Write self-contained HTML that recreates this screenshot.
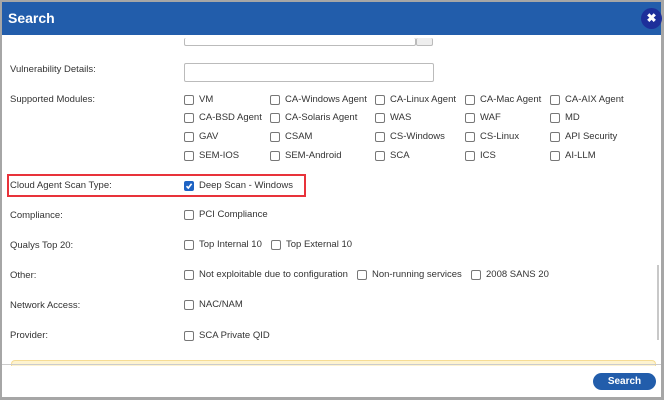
<!DOCTYPE html>
<html><head><style>
*{margin:0;padding:0;box-sizing:border-box}
body{width:664px;height:400px;background:#a6a6a6;font-family:"Liberation Sans",sans-serif;font-size:9.5px;color:#333;position:relative;overflow:hidden}
.win{position:absolute;left:2px;top:2px;width:659px;height:395px;background:#fff;overflow:hidden}
.hd{position:absolute;left:0;top:0;width:659px;height:33px;background:#225dab;color:#fff;font-weight:bold;font-size:14px;line-height:33px;padding-left:6px}
.x{position:absolute;left:641px;top:8px;width:21px;height:21px;border-radius:50%;background:#1d2f9a;color:#fff;font-size:12px;text-align:center;line-height:21px;font-weight:bold}
.t{position:absolute;white-space:nowrap;line-height:12px}
.cb{position:absolute;width:10px;height:10px;border:1px solid #777;border-radius:2px;background:#fff}
.ck{background:#1e63c4;border-color:#1e63c4}
.inp{position:absolute;border:1px solid #bbb;border-radius:2px;background:#fff}
</style></head><body>
<div class="win">
<div class="hd">Search</div>
</div>
<div class="x">✖</div>
<div class="inp" style="left:184px;top:38px;width:232px;height:8px;border-top:none"></div>
<div class="inp" style="left:416px;top:38px;width:17px;height:8px;border-top:none;background:#eee"></div>
<div class="t" style="left:10px;top:64px">Vulnerability Details:</div>
<div class="inp" style="left:184px;top:63px;width:250px;height:19px"></div>
<div class="t" style="left:10px;top:94px">Supported Modules:</div>
<div style="position:absolute;left:7px;top:174px;width:299px;height:23px;border:2px solid #e8323a"></div>
<div class="t" style="left:10px;top:180px">Cloud Agent Scan Type:</div>
<div class="t" style="left:10px;top:210px">Compliance:</div>
<div class="t" style="left:10px;top:240px">Qualys Top 20:</div>
<div class="t" style="left:10px;top:270px">Other:</div>
<div class="t" style="left:10px;top:300px">Network Access:</div>
<div class="t" style="left:10px;top:330px">Provider:</div>
<div id="c"></div>
<div style="position:absolute;left:11px;top:360px;width:645px;height:6px;background:#fdf3d0;border:1px solid #f6dc94;border-bottom:none;border-radius:4px 4px 0 0"></div>
<div style="position:absolute;left:2px;top:364px;width:659px;height:1px;background:#ccc"></div>
<div style="position:absolute;left:657px;top:265px;width:2px;height:75px;background:#c8c8c8"></div>
<div style="position:absolute;left:593px;top:373px;width:63px;height:17px;border-radius:9px;background:#225dab;color:#fff;font-weight:bold;font-size:10px;text-align:center;line-height:17px">Search</div>
<script>
var items=[
[184,95,"VM"],[270,95,"CA-Windows Agent"],[375,95,"CA-Linux Agent"],[465,95,"CA-Mac Agent"],[550,95,"CA-AIX Agent"],
[184,113,"CA-BSD Agent"],[270,113,"CA-Solaris Agent"],[375,113,"WAS"],[465,113,"WAF"],[550,113,"MD"],
[184,132,"GAV"],[270,132,"CSAM"],[375,132,"CS-Windows"],[465,132,"CS-Linux"],[550,132,"API Security"],
[184,151,"SEM-IOS"],[270,151,"SEM-Android"],[375,151,"SCA"],[465,151,"ICS"],[550,151,"AI-LLM"],
[184,181,"Deep Scan - Windows",1],[184,210,"PCI Compliance"],[184,240,"Top Internal 10"],[271,240,"Top External 10"],
[184,270,"Not exploitable due to configuration"],[357,270,"Non-running services"],[471,270,"2008 SANS 20"],
[184,300,"NAC/NAM"],[184,331,"SCA Private QID"]];
var h="";items.forEach(function(i){
h+='<div class="cb'+(i[3]?' ck':'')+'" style="left:'+i[0]+'px;top:'+i[1]+'px">'+(i[3]?'<svg width="8" height="8" style="position:absolute;left:0;top:0"><path d="M1.5 4.2L3.3 6L6.6 1.8" stroke="#fff" stroke-width="1.6" fill="none"/></svg>':'')+'</div>';
h+='<div class="t" style="left:'+(i[0]+15)+'px;top:'+(i[1]-1)+'px">'+i[2]+'</div>';});
document.getElementById("c").innerHTML=h;
</script>
</body></html>
